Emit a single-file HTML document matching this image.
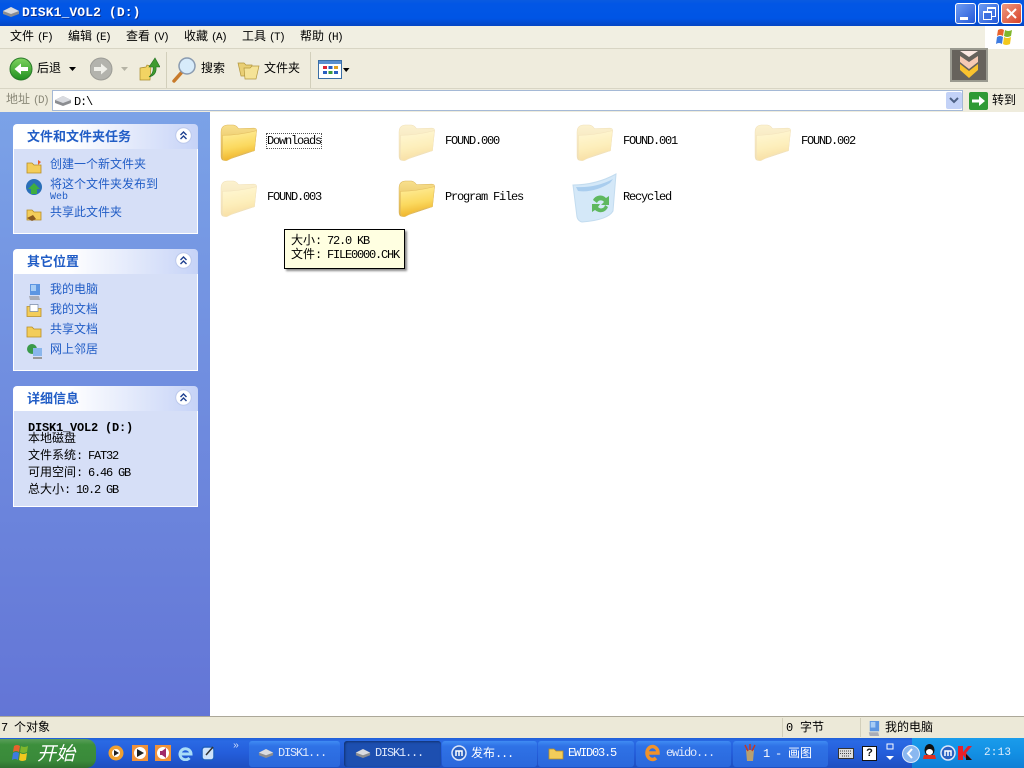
<!DOCTYPE html>
<html><head><meta charset="utf-8"><style>
html,body{margin:0;padding:0;width:1024px;height:768px;overflow:hidden;background:#fff}
body{position:relative;font:12px/14px "WenQuanYi Zen Hei","Noto Sans CJK SC","Liberation Sans",sans-serif;color:#000}
div,svg{position:absolute}
.t{white-space:nowrap;height:14px}
.m{font-family:"Liberation Mono",monospace;font-size:12px;letter-spacing:-1.2px}
.g{margin-left:3px;font-family:"Liberation Mono",monospace;font-size:11px;letter-spacing:-1.6px}
.l{color:#215dc6}.h{color:#215dc6;font-weight:bold;font-size:13px}
.w{color:#fff}
.p{background:#d6dff7;border:1px solid #fff;border-top:0;box-sizing:border-box}
.ph{left:13px;width:185px;height:25px;background:linear-gradient(90deg,#fff,#fff 30%,#c6d3f7);border-radius:4px 4px 0 0}
.c{left:175px}
.b{height:26px;top:741px;background:linear-gradient(#3f8cf3,#2f72e6 20%,#2a68dc);border-radius:3px;box-sizing:border-box}
.sep{width:1px;background:#d2cfbb}
</style></head><body>
<svg width="0" height="0" style="position:absolute"><defs>
<linearGradient id="fg" x1="0" y1="0" x2="0.2" y2="1"><stop offset="0" stop-color="#ffefa0"/><stop offset=".6" stop-color="#fbd95f"/><stop offset="1" stop-color="#efb42c"/></linearGradient>
<linearGradient id="fb" x1="0" y1="0" x2="0" y2="1"><stop offset="0" stop-color="#f8e08e"/><stop offset="1" stop-color="#dcae40"/></linearGradient>
<linearGradient id="gb" x1="0" y1="0" x2="0" y2="1"><stop offset="0" stop-color="#7ed35f"/><stop offset="1" stop-color="#1f8f1f"/></linearGradient>
<symbol id="folder" viewBox="0 0 36 36"><path d="M1 8Q1 1.500 7 1L13 1Q16 1.500 18 4.500L33 4Q36 4 35.500 7L33.500 26 5 35.500Q1 36 1 31Z" fill="url(#fb)" stroke="#dcb65c" stroke-width=".5"/><path d="M2.500 11Q18 11 35.500 6.500L33.500 26Q20 28 7 35.500Q3 36.500 2.500 32Z" fill="url(#fg)" stroke="#e4bf62" stroke-width=".5"/></symbol>
<symbol id="drive" viewBox="0 0 18 12"><path d="M1 5 9 1l8 4v3l-8 3-8-3z" fill="#8b8d91"/><path d="M1 5 9 1l8 4-8 3z" fill="#d9dbe0"/></symbol>
<symbol id="pc" viewBox="0 0 16 18"><path d="M4 1h10v11H4z" fill="#5d96e2"/><path d="M5 2h5v6H5z" fill="#a8cdf5"/><path d="M3 13h10l1 4H4z" fill="#a9adb8"/></symbol>
<symbol id="smf" viewBox="0 0 16 14"><path d="M1 3h5l2 2h7v8H1z" fill="#f3cd5a" stroke="#b88d24" stroke-width=".8"/></symbol>
<symbol id="col" viewBox="0 0 17 17"><circle cx="8.500" cy="8.500" r="7.800" fill="#fff" stroke="#bcc9ec"/><path d="M5.500 8l3-3 3 3M5.500 12l3-3 3 3" fill="none" stroke="#1d3f8f" stroke-width="1.400"/></symbol>
</defs></svg>

<!-- title bar -->
<div style="left:0;top:0;width:1024px;height:26px;background:linear-gradient(#0a5be0,#0256e5 15%,#0055e5 70%,#0446c4)"></div>
<svg style="left:2px;top:6px" width="18" height="12"><use href="#drive"/></svg>
<div class="t w" style="left:22px;top:5px;font:bold 13px/15px 'Liberation Mono',monospace;letter-spacing:.1px;text-shadow:1px 1px #0a2f90">DISK1_VOL2 (D:)</div>
<div style="left:955px;top:3px;width:21px;height:21px;box-sizing:border-box;border:1px solid #fff;border-radius:3px;background:linear-gradient(135deg,#6f9cf2,#2459d8)"><div style="left:4px;top:13px;width:8px;height:3px;background:#fff"></div></div>
<div style="left:978px;top:3px;width:21px;height:21px;box-sizing:border-box;border:1px solid #fff;border-radius:3px;background:linear-gradient(135deg,#6f9cf2,#2459d8)"><div style="left:8px;top:3px;width:7px;height:7px;border:1px solid #fff;border-top-width:2px"></div><div style="left:4px;top:7px;width:7px;height:6px;border:1px solid #fff;border-top-width:2px;background:#3c6fe0"></div></div>
<div style="left:1001px;top:3px;width:21px;height:21px;box-sizing:border-box;border:1px solid #fff;border-radius:3px;background:linear-gradient(135deg,#ee9a80,#d8432a)"><svg style="left:3px;top:3px" width="13" height="13"><path d="M2 2l9 9M11 2l-9 9" stroke="#fff" stroke-width="2"/></svg></div>

<!-- menu -->
<div style="left:0;top:26px;width:1024px;height:23px;background:#f1efe2;border-bottom:1px solid #d8d5c4;box-sizing:border-box"></div>
<div class="t" style="left:10px;top:29px">文件<span class="g">(F)</span></div>
<div class="t" style="left:68px;top:29px">编辑<span class="g">(E)</span></div>
<div class="t" style="left:126px;top:29px">查看<span class="g">(V)</span></div>
<div class="t" style="left:184px;top:29px">收藏<span class="g">(A)</span></div>
<div class="t" style="left:242px;top:29px">工具<span class="g">(T)</span></div>
<div class="t" style="left:300px;top:29px">帮助<span class="g">(H)</span></div>
<div style="left:985px;top:26px;width:39px;height:23px;background:#fff"></div>
<svg style="left:995px;top:27px" width="20" height="20" viewBox="0 0 20 20"><path d="M3 3q3-2 6 0l-1 6q-3-2-6 0z" fill="#e8622c"/><path d="M10 3q3 2 7 0l-1 6q-4 2-7 0z" fill="#7fb62c"/><path d="M2 10q3-2 6 0l-1 7q-3-2-6 0z" fill="#3d7be0"/><path d="M9 10q3 2 7 0l-1 7q-4 2-7 0z" fill="#f2c81e"/></svg>

<!-- toolbar -->
<div style="left:0;top:49px;width:1024px;height:40px;background:#efecdd;border-bottom:1px solid #d8d5c4;box-sizing:border-box"></div>
<svg style="left:9px;top:57px" width="24" height="24" viewBox="0 0 24 24"><circle cx="12" cy="12" r="11" fill="url(#gb)" stroke="#2b7a2b"/><path d="M19 10h-7V6.500L5.500 12l6.500 5.500V14h7z" fill="#fff"/></svg>
<div class="t" style="left:37px;top:61px">后退</div>
<svg style="left:69px;top:67px" width="8" height="4"><path d="M0 0h7L3.500 4z" fill="#000"/></svg>
<svg style="left:90px;top:57px" width="24" height="24" viewBox="0 0 24 24"><circle cx="11" cy="12" r="11" fill="#b3b3ad" stroke="#9c9c96"/><path d="M4 10h7V6.500l6.500 5.500L11 17.500V14H4z" fill="#efefe9"/></svg>
<svg style="left:121px;top:67px" width="8" height="4"><path d="M0 0h7L3.500 4z" fill="#b5b3a5"/></svg>
<svg style="left:139px;top:57px" width="21" height="24" viewBox="0 0 21 24"><path d="M1 11l6-1 1-2 4 1-1 14-10 0z" fill="#f2d463" stroke="#a88a2c" stroke-width=".7"/><path d="M10 20Q15 16 14 10H10l6-9 5 9h-4Q18 18 10 20z" fill="#3f9b2f" stroke="#1f6e1f" stroke-width=".6"/></svg>
<div class="sep" style="left:166px;top:52px;height:36px"></div>
<svg style="left:172px;top:56px" width="25" height="27" viewBox="0 0 25 27"><path d="M2 25l8-9" stroke="#c87a2a" stroke-width="3.500" stroke-linecap="round"/><circle cx="15" cy="10" r="8" fill="#d7ebfa" stroke="#8a9bb0" stroke-width="1.500"/></svg>
<div class="t" style="left:201px;top:61px">搜索</div>
<svg style="left:237px;top:59px" width="23" height="21" viewBox="0 0 23 21"><path d="M1 4h6l2 2h6v11H4z" fill="#e9cf75" stroke="#b3973e" stroke-width=".7"/><path d="M7 9h6l2-2h7l-3 13H8z" fill="#f5e397" stroke="#b3973e" stroke-width=".7"/></svg>
<div class="t" style="left:264px;top:61px">文件夹</div>
<div class="sep" style="left:310px;top:52px;height:36px"></div>
<svg style="left:318px;top:60px" width="24" height="19" viewBox="0 0 24 19"><rect x=".5" y=".5" width="23" height="18" fill="#fff" stroke="#3a6ea5"/><rect x="1" y="1" width="22" height="3" fill="#5b8fd0"/><path d="M5 6h4v3H5z" fill="#d23"/><path d="M10.500 6h4v3h-4z" fill="#2a5fc0"/><path d="M16 6h4v3h-4z" fill="#e0a020"/><path d="M5 11h4v3H5z" fill="#2a5fc0"/><path d="M10.500 11h4v3h-4z" fill="#3a9a3a"/><path d="M16 11h4v3h-4z" fill="#2a5fc0"/></svg>
<svg style="left:343px;top:68px" width="7" height="4"><path d="M0 0h6.500L3.200 4z" fill="#000"/></svg>
<div style="left:950px;top:48px;width:38px;height:34px;box-sizing:border-box;border:2px solid #9a9a90;background:#66625c"></div>
<svg style="left:959px;top:50px" width="20" height="29" viewBox="0 0 20 29"><path d="M1 1h18l-9 6z" fill="#fbe8e2"/><path d="M1 6l9 6 9-6v6l-9 7-9-7z" fill="#f6c9b4"/><path d="M1 14l9 7 9-7v6l-9 8-9-8z" fill="#f9c22e"/></svg>

<!-- address -->
<div style="left:0;top:89px;width:1024px;height:23px;background:#efecdd"></div>
<div class="t" style="left:6px;top:92px;color:#8a8878">地址<span class="g">(D)</span></div>
<div style="left:52px;top:90px;width:911px;height:21px;background:#fff;box-sizing:border-box;border:1px solid #a5b9d6"></div>
<svg style="left:54px;top:95px" width="18" height="12"><use href="#drive"/></svg>
<div class="t m" style="left:74px;top:95px">D:\</div>
<div style="left:946px;top:92px;width:16px;height:17px;background:#c3d2f7;border-radius:2px"><svg style="left:3px;top:5px" width="10" height="7"><path d="M1 1l4 4 4-4" fill="none" stroke="#4d6185" stroke-width="2"/></svg></div>
<svg style="left:969px;top:92px" width="19" height="18" viewBox="0 0 19 18"><rect width="19" height="18" rx="2" fill="#2f9a35"/><path d="M3 7.500h7V4l6 5-6 5v-3.500H3z" fill="#fff"/></svg>
<div class="t" style="left:992px;top:93px">转到</div>

<!-- sidebar -->
<div style="left:0;top:112px;width:210px;height:604px;background:linear-gradient(#7ba2e7,#6375d6)"></div>
<div class="ph" style="top:124px"></div><div class="p" style="top:149px;height:85px;left:13px;width:185px"></div>
<div class="t h" style="left:27px;top:129px">文件和文件夹任务</div>
<svg class="c" style="top:127px" width="17" height="17"><use href="#col"/></svg>
<svg style="left:26px;top:159px" width="16" height="16" viewBox="0 0 16 16"><use href="#smf"/><path d="M12 1l3 2-3 3z" fill="#e8622c"/></svg>
<div class="t l" style="left:50px;top:157px">创建一个新文件夹</div>
<svg style="left:26px;top:179px" width="16" height="16" viewBox="0 0 16 16"><circle cx="8" cy="8" r="8" fill="#2a6fb8"/><path d="M8 4l6 6h-3v5H5v-5H2z" fill="#3fae3f"/></svg>
<div class="t l" style="left:50px;top:177px">将这个文件夹发布到</div>
<div class="t l m" style="left:50px;top:191px;font-size:10px;letter-spacing:0">Web</div>
<svg style="left:26px;top:206px" width="16" height="16" viewBox="0 0 16 16"><use href="#smf"/><path d="M1 12l6-3 3 4-4 2z" fill="#8a5a20"/></svg>
<div class="t l" style="left:50px;top:205px">共享此文件夹</div>

<div class="ph" style="top:249px"></div><div class="p" style="top:274px;height:97px;left:13px;width:185px"></div>
<div class="t h" style="left:27px;top:254px">其它位置</div>
<svg class="c" style="top:252px" width="17" height="17"><use href="#col"/></svg>
<svg style="left:26px;top:283px" width="16" height="18"><use href="#pc"/></svg>
<div class="t l" style="left:50px;top:282px">我的电脑</div>
<svg style="left:26px;top:303px" width="16" height="15" viewBox="0 0 16 14"><use href="#smf"/><path d="M4 1h8v7H4z" fill="#fff" stroke="#7a8aa8" stroke-width=".7"/></svg>
<div class="t l" style="left:50px;top:302px">我的文档</div>
<svg style="left:26px;top:324px" width="16" height="14"><use href="#smf"/></svg>
<div class="t l" style="left:50px;top:322px">共享文档</div>
<svg style="left:26px;top:343px" width="17" height="17" viewBox="0 0 17 17"><circle cx="6" cy="6" r="5" fill="#3a9a4a"/><path d="M7 5h9v8H7z" fill="#8ab6ec"/><path d="M7 14h9v2H7z" fill="#999"/></svg>
<div class="t l" style="left:50px;top:342px">网上邻居</div>

<div class="ph" style="top:386px"></div><div class="p" style="top:411px;height:96px;left:13px;width:185px"></div>
<div class="t h" style="left:27px;top:391px">详细信息</div>
<svg class="c" style="top:389px" width="17" height="17"><use href="#col"/></svg>
<div class="t" style="left:28px;top:421px;font:bold 12px/14px 'Liberation Mono',monospace;letter-spacing:-.2px">DISK1_VOL2 (D:)</div>
<div class="t" style="left:28px;top:431px">本地磁盘</div>
<div class="t" style="left:28px;top:448px">文件系统<span class="m">: FAT32</span></div>
<div class="t" style="left:28px;top:465px">可用空间<span class="m">: 6.46 GB</span></div>
<div class="t" style="left:28px;top:482px">总大小<span class="m">: 10.2 GB</span></div>

<!-- files -->
<svg style="left:220px;top:124px" width="37" height="37"><use href="#folder"/></svg>
<div class="t m" style="left:267px;top:134px;outline:1px dotted #555">Downloads</div>
<svg style="left:398px;top:124px;opacity:.42" width="37" height="37"><use href="#folder"/></svg>
<div class="t m" style="left:445px;top:134px">FOUND.000</div>
<svg style="left:576px;top:124px;opacity:.42" width="37" height="37"><use href="#folder"/></svg>
<div class="t m" style="left:623px;top:134px">FOUND.001</div>
<svg style="left:754px;top:124px;opacity:.42" width="37" height="37"><use href="#folder"/></svg>
<div class="t m" style="left:801px;top:134px">FOUND.002</div>
<svg style="left:220px;top:180px;opacity:.42" width="37" height="37"><use href="#folder"/></svg>
<div class="t m" style="left:267px;top:190px">FOUND.003</div>
<svg style="left:398px;top:180px" width="37" height="37"><use href="#folder"/></svg>
<div class="t m" style="left:445px;top:190px">Program Files</div>
<svg style="left:572px;top:173px" width="46" height="50" viewBox="0 0 46 50"><path d="M1 12Q24 12 44 1L41 38Q36 47 10 49Q6 48 5 44z" fill="#d4e8f8" stroke="#c3dcef"/><path d="M4 14Q24 15 41 6L38 10Q22 20 6 18z" fill="#a9cdee"/><path d="M21 27a8 8 0 0 1 13-2l3-2v9h-8l3-3a4 4 0 0 0-7 1zM36 34a8 8 0 0 1-13 3l-3 2v-8h8l-2 3a4 4 0 0 0 7-2z" fill="#5fb85f"/></svg>
<div class="t m" style="left:623px;top:190px">Recycled</div>

<!-- tooltip -->
<div style="left:284px;top:229px;width:121px;height:40px;box-sizing:border-box;background:#ffffe1;border:1px solid #000;box-shadow:2px 2px 2px #8a8a8a"></div>
<div class="t" style="left:291px;top:233px">大小<span class="m">: 72.0 KB</span></div>
<div class="t" style="left:291px;top:247px">文件<span class="m">: FILE0000.CHK</span></div>

<!-- status -->
<div style="left:0;top:716px;width:1024px;height:22px;background:#ece9d8;border-top:1px solid #aca899;box-sizing:border-box"></div>
<div class="sep" style="left:782px;top:718px;height:19px"></div>
<div class="sep" style="left:860px;top:718px;height:19px"></div>
<div class="t" style="left:1px;top:720px"><span class="m">7</span><span style="margin-left:7px">个对象</span></div>
<div class="t" style="left:786px;top:720px"><span class="m">0</span><span style="margin-left:8px">字节</span></div>
<svg style="left:866px;top:720px" width="15" height="17"><use href="#pc"/></svg>
<div class="t" style="left:885px;top:720px">我的电脑</div>

<!-- taskbar -->
<div style="left:0;top:738px;width:1024px;height:30px;background:linear-gradient(#1f5fd8,#2a6ae4 10%,#245edb 50%,#1e4fc0)"></div>
<div style="left:0;top:739px;width:96px;height:29px;background:linear-gradient(#5a9e5a,#3c8f3c 20%,#3a8a3a 75%,#2f7030);border-radius:0 10px 10px 0"></div>
<svg style="left:11px;top:743px" width="20" height="20" viewBox="0 0 20 20"><path d="M3 3q3-2 6 0l-1 6q-3-2-6 0z" fill="#e8622c"/><path d="M10 3q3 2 7 0l-1 6q-4 2-7 0z" fill="#7fb62c"/><path d="M2 10q3-2 6 0l-1 7q-3-2-6 0z" fill="#3d7be0"/><path d="M9 10q3 2 7 0l-1 7q-4 2-7 0z" fill="#f2c81e"/></svg>
<div class="t w" style="left:37px;top:742px;font-size:19px;line-height:22px;height:22px;font-style:italic">开始</div>
<svg style="left:108px;top:745px" width="16" height="16"><circle cx="8" cy="8" r="7.500" fill="#f0a030"/><circle cx="8" cy="8" r="4" fill="#fff"/><path d="M6 5l5 3-5 3z" fill="#222"/></svg>
<svg style="left:132px;top:745px" width="16" height="16"><rect width="16" height="16" fill="#f0923a"/><circle cx="8" cy="8" r="6" fill="#fff"/><path d="M5 4l7 4-7 4z" fill="#222"/></svg>
<svg style="left:155px;top:745px" width="16" height="16"><rect width="16" height="16" fill="#f0923a"/><circle cx="8" cy="8" r="6" fill="#fff"/><path d="M5 6h2l4-3v10l-4-3H5z" fill="#a02a6a"/></svg>
<svg style="left:178px;top:745px" width="16" height="16" viewBox="0 0 16 16"><path d="M2 9h11a5.500 5.500 0 1 0-1.500 4" fill="none" stroke="#a9dcf8" stroke-width="3"/></svg>
<svg style="left:201px;top:745px" width="15" height="16"><rect x="1" y="2" width="12" height="13" rx="3" fill="#cfe3fa" stroke="#1f5fc0" stroke-width="1.500"/><path d="M5 10l7-8" stroke="#333" stroke-width="1.500"/></svg>
<div class="t" style="left:233px;top:742px;color:#cfdcf8;font:10px/10px 'Liberation Mono',monospace;height:10px">»</div>

<div class="b" style="left:249px;width:91px"></div>
<svg style="left:258px;top:748px" width="16" height="11"><use href="#drive"/></svg>
<div class="t m" style="left:278px;top:746px;color:#dfe8fb">DISK1...</div>
<div class="b" style="left:344px;width:97px;background:#1d4fb0;box-shadow:inset 1px 1px 2px #10306f"></div>
<svg style="left:355px;top:748px" width="16" height="11"><use href="#drive"/></svg>
<div class="t m" style="left:375px;top:746px;color:#dfe8fb">DISK1...</div>
<div class="b" style="left:442px;width:95px"></div>
<svg style="left:451px;top:745px" width="16" height="16"><circle cx="8" cy="8" r="7" fill="#2a60c0" stroke="#dfe8fb" stroke-width="1.500"/><path d="M5 11V6h6v5M8 6v5" fill="none" stroke="#fff" stroke-width="1.500"/></svg>
<div class="t w" style="left:471px;top:746px">发布<span class="m">...</span></div>
<div class="b" style="left:538px;width:96px"></div>
<svg style="left:548px;top:746px" width="16" height="14"><use href="#smf"/></svg>
<div class="t m" style="left:568px;top:746px;color:#fff">EWID03.5</div>
<div class="b" style="left:636px;width:95px"></div>
<svg style="left:645px;top:743px" width="16" height="19" viewBox="0 0 16 19"><path d="M2 10h11a5.500 6.500 0 1 0-2 5" fill="none" stroke="#f0922a" stroke-width="3.500"/></svg>
<div class="t m" style="left:666px;top:746px;color:#dfe8fb">ewido...</div>
<div class="b" style="left:733px;width:95px"></div>
<svg style="left:743px;top:744px" width="14" height="17"><path d="M3 6h8l-1 11H4z" fill="#b8a070"/><path d="M2 1l3 6M7 0v6M12 1L9 7" stroke="#c03a2a" stroke-width="1.500"/></svg>
<div class="t w" style="left:763px;top:746px"><span class="m">1 -</span><span style="margin-left:7px">画图</span></div>

<svg style="left:838px;top:746px" width="16" height="13"><rect x=".5" y="2.500" width="15" height="10" fill="#ddd" stroke="#333"/><path d="M2 5h12M2 7.500h12M4 10h8" stroke="#444" stroke-dasharray="1 1"/></svg>
<div style="left:862px;top:746px;width:13px;height:13px;background:#fff;border:1px solid #111;font:bold 11px/13px 'Liberation Sans',sans-serif;text-align:center;color:#111">?</div>
<svg style="left:885px;top:743px" width="10" height="18"><rect x="2" y="1" width="6" height="5" fill="none" stroke="#fff"/><path d="M1 13h8l-4 4z" fill="#fff"/></svg>
<div style="left:912px;top:738px;width:112px;height:30px;background:linear-gradient(#1a9ceb,#1390e4 50%,#0f7fd6)"></div>
<div style="left:902px;top:745px;width:16px;height:16px;border-radius:50%;background:#8ab8f0;border:1px solid #dfeafb"></div>
<svg style="left:906px;top:748px" width="8" height="11"><path d="M6 1L2 5.500 6 10" fill="none" stroke="#fff" stroke-width="2"/></svg>
<svg style="left:921px;top:743px" width="17" height="18" viewBox="0 0 17 18"><ellipse cx="8.500" cy="7" rx="5" ry="6" fill="#111"/><ellipse cx="8.500" cy="9" rx="3.500" ry="3" fill="#fff"/><path d="M3 12h11l1 4H2z" fill="#e03020"/></svg>
<svg style="left:940px;top:745px" width="16" height="16"><circle cx="8" cy="8" r="7" fill="#2a60c0" stroke="#dfe8fb" stroke-width="1.500"/><path d="M5 11V6h6v5M8 6v5" fill="none" stroke="#fff" stroke-width="1.500"/></svg>
<svg style="left:957px;top:745px" width="16" height="16" viewBox="0 0 16 16"><path d="M1 1h5v6l5-6h4L9 8l6 7h-5L6 10v5H1z" fill="#e8202a"/><path d="M9 9l6 6H9z" fill="#111"/></svg>
<div class="t" style="left:984px;top:746px;font:11px/14px 'Liberation Mono',monospace;letter-spacing:.2px;color:#e3effb">2:13</div>
</body></html>
